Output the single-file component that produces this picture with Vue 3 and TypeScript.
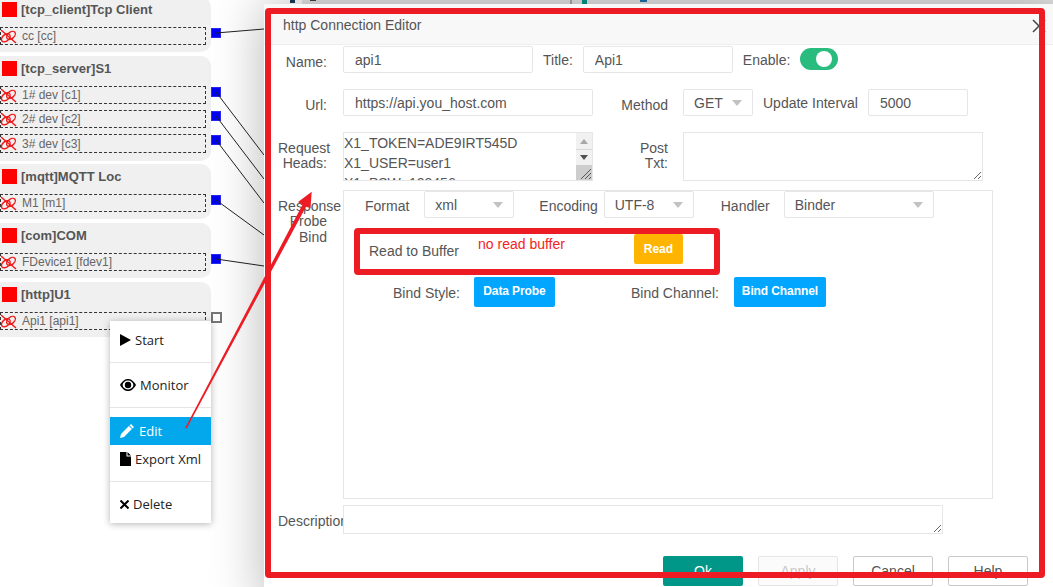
<script setup lang="ts">
interface Conn { text: string; port: 'on' | 'off' }
interface Group { title: string; conns: Conn[] }

const groups: Group[] = [
  { title: '[tcp_client]Tcp Client', conns: [{ text: 'cc [cc]', port: 'on' }] },
  {
    title: '[tcp_server]S1',
    conns: [
      { text: '1# dev [c1]', port: 'on' },
      { text: '2# dev [c2]', port: 'on' },
      { text: '3# dev [c3]', port: 'on' },
    ],
  },
  { title: '[mqtt]MQTT Loc', conns: [{ text: 'M1 [m1]', port: 'on' }] },
  { title: '[com]COM', conns: [{ text: 'FDevice1 [fdev1]', port: 'on' }] },
  { title: '[http]U1', conns: [{ text: 'Api1 [api1]', port: 'off' }] },
]

const wires = [
  [216, 33, 264, 29],
  [216, 92, 264, 155],
  [216, 116, 264, 179],
  [216, 140, 264, 203],
  [216, 200, 264, 235],
  [216, 259, 264, 266],
]

const heads = 'X1_TOKEN=ADE9IRT545D\nX1_USER=user1\nX1_PSW=123456'
</script>

<template>
  <div class="page">
    <div class="toolbar">
      <span class="tb-dark"></span>
      <span class="tb-bits"></span>
      <span class="tb-sep"></span>
      <span class="tb-teal"></span>
      <span class="tb-blue"></span>
    </div>

    <div class="canvas">
      <div v-for="g in groups" :key="g.title" class="group">
        <div class="group-title"><i class="stop"></i>{{ g.title }}</div>
        <div v-for="c in g.conns" :key="c.text" class="conn">
          <svg class="link" width="17" height="15" viewBox="0 0 17 15">
            <g fill="none" stroke="#f01818" stroke-width="1.4">
              <ellipse cx="5.8" cy="8.8" rx="5" ry="3.2" transform="rotate(-40 5.8 8.8)" />
              <ellipse cx="11" cy="6.4" rx="5" ry="3.2" transform="rotate(-40 11 6.4)" />
              <path d="M1 1 L16 14" />
            </g>
          </svg>
          <span>{{ c.text }}</span>
          <i :class="['port', c.port]"></i>
        </div>
      </div>
    </div>

    <svg class="wires" width="1053" height="587">
      <line v-for="(w, i) in wires" :key="i" :x1="w[0]" :y1="w[1]" :x2="w[2]" :y2="w[3]" stroke="#222" stroke-width="1" />
    </svg>

    <section class="dialog">
      <header class="dlg-head">
        <span>http Connection Editor</span>
        <svg class="close" width="14" height="14" viewBox="0 0 14 14">
          <path d="M1 1 L13 13 M13 1 L1 13" stroke="#444" stroke-width="1.5" fill="none" />
        </svg>
      </header>

      <div class="row r-name">
        <label class="lbl">Name:</label>
        <input class="inp w190" value="api1" />
        <span class="txt ml10 mr10">Title:</span>
        <input class="inp w150" value="Api1" />
        <span class="txt ml10">Enable:</span>
        <span class="switch"><i></i></span>
      </div>

      <div class="row r-url">
        <label class="lbl">Url:</label>
        <input class="inp w250" value="https://api.you_host.com" />
        <label class="lbl2">Method</label>
        <div class="sel w70">GET<i class="caret"></i></div>
        <span class="txt ml10">Update Interval</span>
        <input class="inp w100 ml10" value="5000" />
      </div>

      <div class="row r-heads">
        <label class="lbl">Request Heads:</label>
        <div class="area-wrap w250">
          <textarea class="area w250 h49" :value="heads"></textarea>
          <div class="sbar">
            <span class="sb-btn"><i class="tri-up"></i></span>
            <span class="sb-btn"><i class="tri-down"></i></span>
            <span class="sb-thumb">
              <svg width="12" height="12" viewBox="0 0 12 12">
                <path d="M1 11 L11 1 M5 11 L11 5 M9 11 L11 9" stroke="#555" stroke-width="1" fill="none" />
              </svg>
            </span>
          </div>
        </div>
        <label class="lbl2">Post Txt:</label>
        <textarea class="area w300 h49"></textarea>
      </div>

      <div class="row r-probe">
        <label class="lbl">Response Probe Bind</label>
        <div class="probe">
          <div class="probe-top">
            <span class="t-format">Format</span>
            <div class="sel w90">xml<i class="caret"></i></div>
            <span class="t-enc">Encoding</span>
            <div class="sel w90">UTF-8<i class="caret"></i></div>
            <span class="t-hand">Handler</span>
            <div class="sel w150">Binder<i class="caret"></i></div>
          </div>
          <div class="probe-read">
            <span class="t-read">Read to Buffer</span>
            <span class="t-none">no read buffer</span>
            <button class="btn warm">Read</button>
          </div>
          <div class="probe-bind">
            <span class="t-style">Bind Style:</span>
            <button class="btn blue w81">Data Probe</button>
            <span class="t-chan">Bind Channel:</span>
            <button class="btn blue w92">Bind Channel</button>
          </div>
        </div>
      </div>

      <div class="row r-desc">
        <label class="lbl nowrap">Description</label>
        <textarea class="area w600 h29"></textarea>
      </div>

      <footer class="dlg-foot">
        <button class="fbtn ok">Ok</button>
        <button class="fbtn dis">Apply</button>
        <button class="fbtn plain">Cancel</button>
        <button class="fbtn plain">Help</button>
      </footer>
    </section>

    <nav class="menu">
      <div class="mi">
        <svg width="11" height="12" viewBox="0 0 11 12"><path d="M0 0 L11 6 L0 12 Z" fill="#000" /></svg>
        <span>Start</span>
      </div>
      <hr />
      <div class="mi eye">
        <svg width="16" height="12" viewBox="0 0 16 12">
          <path d="M0 6 C3 1 5.5 0 8 0 C10.5 0 13 1 16 6 C13 11 10.5 12 8 12 C5.5 12 3 11 0 6 Z" fill="#000" />
          <ellipse cx="8" cy="6" rx="5.4" ry="4.4" fill="#fff" />
          <circle cx="8" cy="6" r="3.2" fill="#000" />
        </svg>
        <span>Monitor</span>
      </div>
      <hr class="after-eye" />
      <div class="mi active">
        <svg width="14" height="14" viewBox="0 0 14 14">
          <path d="M11 0 L14 3 L12.6 4.4 L9.6 1.4 Z M8.9 2.1 L11.9 5.1 L4 13 L0 14 L1 10 Z" fill="#fff" />
        </svg>
        <span>Edit</span>
      </div>
      <div class="mi">
        <svg width="11" height="14" viewBox="0 0 11 14"><path d="M0 0 H6.5 V4.5 H11 V14 H0 Z M7.5 0 L11 3.5 H7.5 Z" fill="#000" /></svg>
        <span>Export Xml</span>
      </div>
      <hr />
      <div class="mi del">
        <svg width="9" height="9" viewBox="0 0 9 9"><path d="M0.5 0.5 L8.5 8.5 M8.5 0.5 L0.5 8.5" stroke="#000" stroke-width="2" fill="none" /></svg>
        <span>Delete</span>
      </div>
    </nav>

    <svg class="marks" width="1053" height="587">
      <rect x="268" y="11" width="774" height="564" rx="1" fill="none" stroke="#ed1c24" stroke-width="6" />
      <rect x="357" y="231" width="360" height="41" rx="1" fill="none" stroke="#ed1c24" stroke-width="6" />
      <polygon points="311.7,191.7 310.5,208 306,206.8 186.6,428.4 185.4,427.6 302.4,204.8 298,202" fill="#ed1c24" />
    </svg>
  </div>
</template>

<style scoped>
.page {
  position: relative;
  width: 1053px;
  height: 587px;
  overflow: hidden;
  background: #fff;
  font-family: "Liberation Sans", Arial, sans-serif;
  font-size: 14px;
  color: #555;
}
.toolbar {
  position: absolute;
  left: 290px;
  right: 0;
  top: 0;
  height: 4px;
  background: linear-gradient(90deg, #fff 12px, #e6e6e6 12px);
  display: flex;
  align-items: flex-start;
}
.tb-dark { width: 5px; height: 3px; background: #1c3a55; }
.tb-bits { width: 6px; height: 1px; margin-left: 15px; background: #444; }
.tb-sep { width: 2px; height: 4px; margin-left: 254px; background: #aaa; }
.tb-teal { width: 5px; height: 4px; margin-left: 10px; background: #009688; }
.tb-blue { width: 7px; height: 2px; margin-left: 53px; background: #1a73a8; }

.canvas {
  position: absolute;
  left: -8px;
  top: -3px;
  width: 219px;
  display: flex;
  flex-direction: column;
  gap: 3.5px;
}
.group {
  background: #f0f0f0;
  border-radius: 10px;
  padding: 5px 5px 7px 8px;
  display: flex;
  flex-direction: column;
  gap: 6px;
}
.group:nth-child(2) { padding-bottom: 8px; }
.group-title {
  display: flex;
  align-items: center;
  height: 15px;
  margin-bottom: 4px;
  padding-left: 2px;
  font-size: 13px;
  font-weight: bold;
  color: #555;
  white-space: nowrap;
}
.stop {
  width: 15px;
  height: 15px;
  background: #f00;
  margin-right: 4px;
  flex: none;
}
.conn {
  position: relative;
  height: 18.3px;
  box-sizing: border-box;
  border: 1px dashed #333;
  display: flex;
  align-items: center;
  padding-left: 21px;
  font-size: 12px;
  color: #666;
}
.link { position: absolute; left: -1px; top: 1px; }
.port { position: absolute; left: 210px; top: 0; width: 10px; height: 10px; box-sizing: border-box; }
.port.on { background: #0000f5; border: 1px solid #2a2af0; }
.port.off { width: 11px; height: 11px; top: -1px; background: #fff; border: 2px solid #777; }

.wires { position: absolute; left: 0; top: 0; }

.dialog {
  position: absolute;
  left: 264px;
  top: 4px;
  width: 800px;
  height: 600px;
  background: #fff;
  box-shadow: 1px 1px 50px rgba(0, 0, 0, 0.3);
}
.dlg-head {
  position: relative;
  height: 41px;
  box-sizing: border-box;
  border-bottom: 1px solid #eee;
  background: #f8f8f8;
  padding: 13px 0 0 19px;
  line-height: 16px;
}
.close { position: absolute; left: 768px; top: 15px; }

.row { display: flex; align-items: flex-start; }
.r-name { margin-top: 1px; height: 27px; align-items: center; }
.r-url { margin-top: 16px; height: 27px; }
.r-heads { margin-top: 16px; height: 49px; }
.r-probe { margin-top: 9px; height: 309px; }
.r-desc { margin-top: 6px; height: 29px; }

.lbl {
  flex: none;
  box-sizing: border-box;
  width: 49px;
  margin: 0 16px 0 14px;
  padding-top: 9px;
  line-height: 15.4px;
  text-align: right;
  align-self: flex-start;
}
.nowrap { white-space: nowrap; text-align: left; }
.lbl2 {
  flex: none;
  width: 75px;
  margin-right: 15px;
  padding-top: 9px;
  line-height: 15.4px;
  text-align: right;
  box-sizing: border-box;
  padding-left: 40px;
}
.r-url .lbl2 { padding-left: 0; }
.txt { flex: none; line-height: 29px; align-self: flex-start; }
.ml10 { margin-left: 10px; }
.mr10 { margin-right: 10px; }

.inp, .sel, .area {
  box-sizing: border-box;
  border: 1px solid #e6e6e6;
  border-radius: 2px;
  background: #fff;
  color: #555;
  font: 14px "Liberation Sans", Arial, sans-serif;
  outline: none;
  flex: none;
}
.inp { height: 27px; padding: 0 11px; }
.sel {
  position: relative;
  height: 27px;
  line-height: 27px;
  padding-left: 10px;
}
.caret {
  position: absolute;
  right: 10px;
  top: 10px;
  width: 0;
  height: 0;
  border-left: 5.5px solid transparent;
  border-right: 5.5px solid transparent;
  border-top: 6px solid #c2c2c2;
}
.area {
  display: block;
  padding: 0;
  line-height: 20px;
  border-radius: 0;
  resize: both;
  overflow: hidden;
}
.area-wrap { position: relative; flex: none; height: 49px; }
.sbar {
  position: absolute;
  right: 1px;
  top: 1px;
  bottom: 1px;
  width: 16px;
  display: flex;
  flex-direction: column;
}
.sb-btn {
  flex: none;
  height: 16px;
  background: #f1f1f1;
  display: flex;
  align-items: center;
  justify-content: center;
}
.sb-btn + .sb-btn { border-top: 1px solid #d8d8d8; box-sizing: border-box; }
.tri-up, .tri-down {
  width: 0;
  height: 0;
  border-left: 4.5px solid transparent;
  border-right: 4.5px solid transparent;
}
.tri-up { border-bottom: 5px solid #a8a8a8; }
.tri-down { border-top: 5px solid #505050; }
.sb-thumb {
  flex: 1;
  background: #cdcdcd;
  display: flex;
  justify-content: flex-end;
  align-items: flex-end;
  overflow: hidden;
}
.sb-thumb svg { flex: none; }
.w70 { width: 70px; }
.w90 { width: 90px; }
.w100 { width: 100px; }
.w150 { width: 150px; }
.w190 { width: 190px; }
.w250 { width: 250px; }
.w300 { width: 300px; }
.w600 { width: 600px; }
.h49 { height: 49px; }
.h29 { height: 29px; }

.switch {
  flex: none;
  box-sizing: border-box;
  width: 38px;
  height: 22px;
  margin: 2px 0 0 10px;
  padding-left: 16px;
  border-radius: 11px;
  background: #2abb7f;
  display: flex;
  align-items: center;
  align-self: flex-start;
}
.switch i {
  width: 16px;
  height: 16px;
  border-radius: 50%;
  background: #fff;
}

.probe {
  box-sizing: border-box;
  width: 650px;
  height: 309px;
  border: 1px solid #e6e6e6;
  flex: none;
}
.probe-top { display: flex; align-items: flex-start; height: 27px; }
.probe-top span { line-height: 31px; flex: none; }
.t-format { margin-left: 21px; margin-right: 15px; }
.t-enc { margin-left: 25px; margin-right: 6px; }
.t-hand { margin-left: 27px; margin-right: 14px; }

.probe-read {
  position: relative;
  display: flex;
  align-items: flex-start;
  height: 30px;
  margin-top: 16px;
}
.t-read { margin-left: 25px; line-height: 34px; flex: none; }
.t-none { margin-left: 19px; color: #f42424; line-height: 20px; flex: none; }
.btn {
  box-sizing: border-box;
  height: 30px;
  border: 0;
  border-radius: 2px;
  color: #fff;
  font: bold 12px "Liberation Sans", Arial, sans-serif;
  padding: 0 0 2px;
  flex: none;
}
.warm { width: 49px; background: #ffb400; margin-left: 69px; padding: 0; }
.blue { background: #00a6ff; letter-spacing: -0.1px; }
.w81 { width: 81px; }
.w92 { width: 92px; }

.probe-bind {
  display: flex;
  align-items: flex-start;
  height: 30px;
  margin-top: 13px;
}
.probe-bind span { line-height: 32px; flex: none; }
.t-style { margin-left: 49px; margin-right: 14px; }
.t-chan { margin-left: 76px; margin-right: 15px; }

.dlg-foot {
  display: flex;
  gap: 15px;
  margin: 22px 0 0 399px;
}
.fbtn {
  box-sizing: border-box;
  width: 80px;
  height: 30px;
  border-radius: 2px;
  font: 14px "Liberation Sans", Arial, sans-serif;
  padding: 0;
}
.ok { background: #009688; border: 0; color: #fff; }
.dis { background: #fbfbfb; border: 1px solid #e6e6e6; color: #c9c9c9; }
.plain { background: #fff; border: 1px solid #c9c9c9; color: #555; }

.menu {
  position: absolute;
  left: 110px;
  top: 321px;
  width: 101px;
  box-sizing: border-box;
  padding: 5px 0;
  background: #fff;
  box-shadow: 0 1px 7px rgba(0, 0, 0, 0.3);
  font-family: "Open Sans", sans-serif;
  font-size: 13px;
  color: #222;
}
.menu hr {
  height: 1px;
  margin: 8px 0;
  border: 0;
  background: #e5e5e5;
}
.menu hr.after-eye { margin-bottom: 9px; }
.mi {
  display: flex;
  align-items: center;
  height: 28px;
  padding-left: 10px;
  gap: 4px;
  white-space: nowrap;
}
.mi.active { background: #03a8ec; color: #fff; gap: 5px; }

.marks { position: absolute; left: 0; top: 0; pointer-events: none; }
</style>

<style>
html, body { margin: 0; overflow: hidden; }
</style>
